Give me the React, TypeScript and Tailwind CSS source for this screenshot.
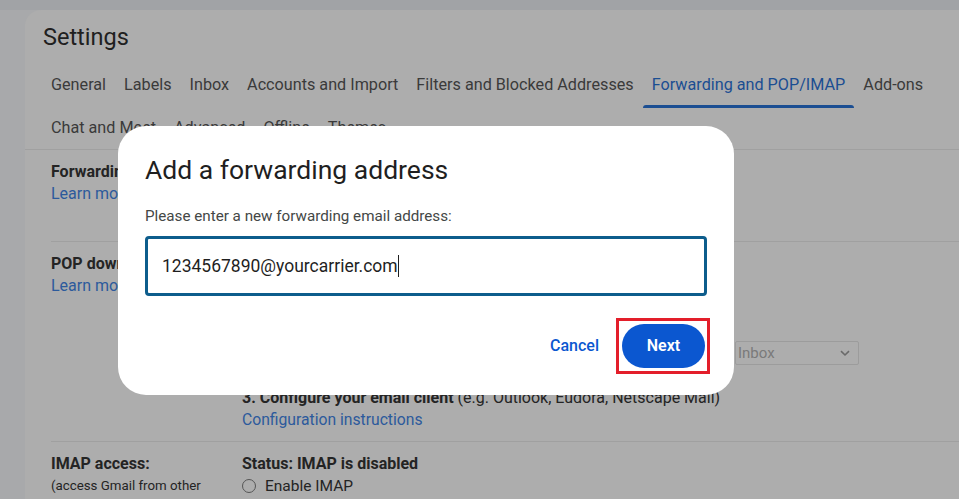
import React from "react";

const tabs1 = [
  "General",
  "Labels",
  "Inbox",
  "Accounts and Import",
  "Filters and Blocked Addresses",
  "Forwarding and POP/IMAP",
  "Add-ons",
];
const tabs2 = ["Chat and Meet", "Advanced", "Offline", "Themes"];

export default function App() {
  return (
    <div
      className="relative w-[959px] h-[499px] overflow-hidden bg-[#a8a9ab] text-[#242424]"
      style={{ fontFamily: "Roboto, 'Liberation Sans', sans-serif" }}
    >
      <div className="h-[10px] bg-[#a1a3a6]" />
      <div className="ml-[25px] h-[489px] bg-[#adadad] rounded-tl-[16px]">
        <div className="pl-[18px] pt-[12px] text-[23.5px] leading-[30px] text-[#202020]">Settings</div>
        <div className="pl-[17px] pr-2 mt-[11px] border-b border-[#a0a0a0]">
          <div className="flex h-[45px] items-stretch">
            {tabs1.map((t) => {
              const active = t === "Forwarding and POP/IMAP";
              return (
                <div
                  key={t}
                  className={`relative flex items-center px-[9px] pb-[1px] text-[16.2px] ${active ? "text-[#1b4e92]" : "text-[#3a3a3a]"}`}
                >
                  {t}
                  {active && (
                    <div className="absolute left-0 right-0 bottom-[0px] h-[3px] rounded-t-[3px] bg-[#1b4e92]" />
                  )}
                </div>
              );
            })}
          </div>
          <div className="flex h-[41px] items-center">
            {tabs2.map((t) => (
              <div key={t} className="px-[9px] text-[16.2px] text-[#3a3a3a]">
                {t}
              </div>
            ))}
          </div>
        </div>

        <div className="pl-[26px] text-[16px]">
          <div className="flex border-b border-[#a0a0a0] h-[92px] pt-[11px]">
            <div className="w-[191px]">
              <div className="font-bold leading-[22px]">Forwarding:</div>
              <div className="text-[#2c5a9c] leading-[22px]">Learn more</div>
            </div>
            <div className="leading-[22px]">
              <span className="inline-block px-3 py-1 bg-[#b4b4b4]">Add a forwarding address</span>
            </div>
          </div>
          <div className="flex border-b border-[#a0a0a0] h-[200px] pt-[11px]">
            <div className="w-[191px]">
              <div className="font-bold leading-[22px]">POP download:</div>
              <div className="text-[#2c5a9c] leading-[22px]">Learn more</div>
            </div>
            <div className="flex flex-col">
              <div className="font-bold leading-[21px]">1. Status: POP is disabled</div>
              <div className="leading-[21px]">Enable POP for all mail</div>
              <div className="leading-[21px]">Enable POP for mail that arrives from now on</div>
              <div className="flex items-center mt-[25px] h-[24px]">
                <span className="w-[493px] font-bold">2. When messages</span>
                <div className="w-[124px] h-[24px] border border-[#9c9c9c] rounded-[2px] flex items-center justify-between pl-[2px] pr-[8px] text-[15px] text-[#7a7a7a]">
                  <span>Inbox</span>
                  <svg width="10" height="7" viewBox="0 0 10 7">
                    <path d="M1 1.2 L5 5 L9 1.2" fill="none" stroke="#6a6a6a" strokeWidth="1.6" />
                  </svg>
                </div>
              </div>
              <div className="mt-[22px] text-[16px] leading-[22px]">
                <span className="font-bold">3. Configure your email client</span> (e.g. Outlook, Eudora, Netscape Mail)
              </div>
              <div className="text-[#2c5a9c] text-[15.7px] leading-[22px]">Configuration instructions</div>
            </div>
          </div>
          <div className="flex pt-[11px]">
            <div className="w-[191px]">
              <div className="font-bold leading-[22px]">IMAP access:</div>
              <div className="text-[13.3px] leading-[22px]">(access Gmail from other</div>
            </div>
            <div>
              <div className="font-bold leading-[22px]">Status: IMAP is disabled</div>
              <div className="flex items-center gap-[9px] leading-[22px] text-[15.5px]">
                <span className="w-[14px] h-[14px] rounded-full border border-[#555]" />
                <span>Enable IMAP</span>
              </div>
            </div>
          </div>
        </div>
      </div>

      {/* Dialog */}
      <div className="absolute left-[118px] top-[126px] w-[616px] h-[269px] bg-white rounded-[28px] px-[27px] pt-[27px]">
        <div className="text-[26.5px] leading-[34px] text-[#1f1f1f]">Add a forwarding address</div>
        <div className="mt-[19px] text-[15.2px] leading-[20px] text-[#444746]">
          Please enter a new forwarding email address:
        </div>
        <div className="mt-[10px] h-[60px] border-[3px] border-[#0d5d8c] rounded-[4px] flex items-center pl-[14px] text-[17.5px] text-[#1f1f1f]">
          <span>1234567890@yourcarrier.com</span>
          <span className="w-[1.5px] h-[22px] bg-[#1f1f1f]" />
        </div>
        <div className="flex justify-end items-center mt-[22px] mr-[-3px]">
          <span className="text-[16px] font-medium text-[#0b57d0] mr-[17px]">Cancel</span>
          <div className="border-[3px] border-[#e31e2a] pl-[3px] pr-[2px] py-[3px]">
            <div className="w-[83px] h-[44px] rounded-full bg-[#0b57d0] text-white font-semibold text-[16px] flex items-center justify-center">
              Next
            </div>
          </div>
        </div>
      </div>
    </div>
  );
}
